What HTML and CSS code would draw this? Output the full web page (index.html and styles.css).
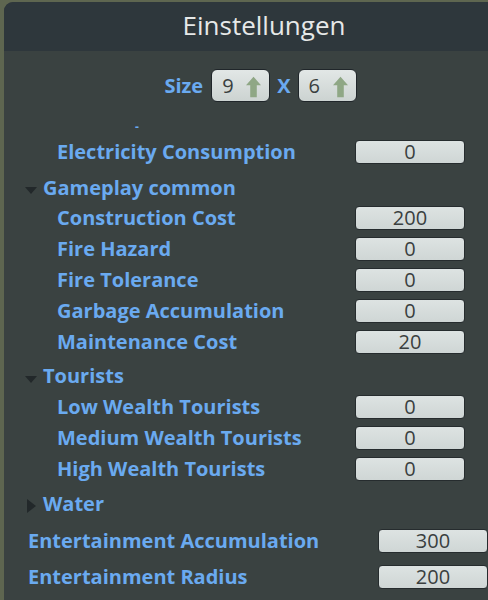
FILE: index.html
```html
<!DOCTYPE html>
<html>
<head>
<meta charset="utf-8">
<link rel="stylesheet" href="styles.css">
</head>
<body>
<div class="panel">
  <div class="header">Einstellungen</div>
  <div class="content">
    <div class="size-row">
      <span class="size-label">Size</span>
      <div class="size-box"><span class="size-val">9</span><svg class="arrow" width="15" height="22" viewBox="0 0 16 22"><path d="M8 0 L16 9 L11.5 9 L11.5 22 L4.5 22 L4.5 9 L0 9 Z" fill="#8fa785"/></svg></div>
      <span class="size-x">X</span>
      <div class="size-box"><span class="size-val">6</span><svg class="arrow" width="15" height="22" viewBox="0 0 16 22"><path d="M8 0 L16 9 L11.5 9 L11.5 22 L4.5 22 L4.5 9 L0 9 Z" fill="#8fa785"/></svg></div>
    </div>
    <div class="dash"><span>-</span></div>
    <div class="row sub"><span class="label">Electricity Consumption</span><span class="field">0</span></div>
    <div class="group-head g1"><span class="tri-down"></span><span class="label">Gameplay common</span></div>
    <div class="row sub"><span class="label">Construction Cost</span><span class="field">200</span></div>
    <div class="row sub"><span class="label">Fire Hazard</span><span class="field">0</span></div>
    <div class="row sub"><span class="label">Fire Tolerance</span><span class="field">0</span></div>
    <div class="row sub"><span class="label">Garbage Accumulation</span><span class="field">0</span></div>
    <div class="row sub"><span class="label">Maintenance Cost</span><span class="field">20</span></div>
    <div class="group-head g2"><span class="tri-down"></span><span class="label">Tourists</span></div>
    <div class="row sub"><span class="label">Low Wealth Tourists</span><span class="field">0</span></div>
    <div class="row sub"><span class="label">Medium Wealth Tourists</span><span class="field">0</span></div>
    <div class="row sub"><span class="label">High Wealth Tourists</span><span class="field">0</span></div>
    <div class="group-head g3"><span class="tri-right"></span><span class="label">Water</span></div>
    <div class="row top t1"><span class="label">Entertainment Accumulation</span><span class="field">300</span></div>
    <div class="row top"><span class="label">Entertainment Radius</span><span class="field">200</span></div>
  </div>
</div>
</body>
</html>
```
FILE: styles.css
```css
html, body {
  margin: 0;
  padding: 0;
  height: 100%;
  overflow: hidden;
}
body {
  background: #5e6650;
  font-family: "Open Sans", "DejaVu Sans", sans-serif;
}
.panel {
  margin: 2px 0 0 4px;
  height: 598px;
  background: #3a4241;
  border-top-left-radius: 9px;
  overflow: hidden;
}
.header {
  height: 49px;
  background: #2e373c;
  color: #e6e8e8;
  font-size: 26px;
  line-height: 47px;
  text-align: center;
  padding-left: 36px;
}
.content {
  display: flex;
  flex-direction: column;
}
.size-row {
  display: flex;
  align-items: center;
  justify-content: center;
  gap: 8px;
  margin-top: 18px;
  height: 33px;
  padding-left: 29px;
}
.size-label, .size-x {
  color: #6aaaf0;
  font-weight: 700;
  font-size: 20px;
}
.size-x { margin: 0 -1px; }
.size-box {
  box-sizing: border-box;
  width: 59px;
  height: 33px;
  border: 1px solid #20262a;
  border-radius: 6px;
  background: linear-gradient(#e2e7e6, #ccd3d1);
  display: flex;
  align-items: center;
  justify-content: space-between;
  padding: 0 8px 0 10px;
}
.size-val {
  color: #3a3f3f;
  font-size: 20px;
}
.arrow { margin-top: 3px; }
.dash {
  height: 34px;
  padding-left: 131px;
  box-sizing: border-box;
  padding-top: 19px;
}
.dash span {
  color: #6aaaf0;
  font-weight: 700;
  font-size: 12px;
  line-height: 12px;
  display: block;
}
.row {
  display: flex;
  align-items: center;
  justify-content: space-between;
  height: 31px;
}
.label {
  color: #6aaaf0;
  font-weight: 700;
  font-size: 20px;
  line-height: 24px;
}
.row.sub {
  padding-left: 53px;
  padding-right: 23px;
}
.row.top {
  padding-left: 24px;
  padding-right: 0;
  height: 36px;
}
.field {
  width: 110px;
  height: 24px;
  box-sizing: border-box;
  border: 1px solid #262c2e;
  border-radius: 4px;
  background: linear-gradient(#dde3e2, #cfd6d5);
  color: #3a3f3f;
  font-size: 20px;
  line-height: 22px;
  text-align: center;
}
.group-head {
  display: flex;
  align-items: center;
  height: 31px;
  padding-left: 21px;
  gap: 6px;
}
.g1 { margin-top: 5.5px; height: 30px; }
.g2 { margin-top: 3px; }
.g3 { margin-top: 3.5px; }
.t1 { margin-top: 3.5px; }
.tri-down {
  width: 0;
  height: 0;
  border-left: 6px solid transparent;
  border-right: 6px solid transparent;
  border-top: 7px solid #22282a;
  margin-top: 6px;
}
.tri-right {
  width: 0;
  height: 0;
  border-top: 7px solid transparent;
  border-bottom: 7px solid transparent;
  border-left: 9px solid #22282a;
  margin: 4px 1px 0 2px;
}
```
